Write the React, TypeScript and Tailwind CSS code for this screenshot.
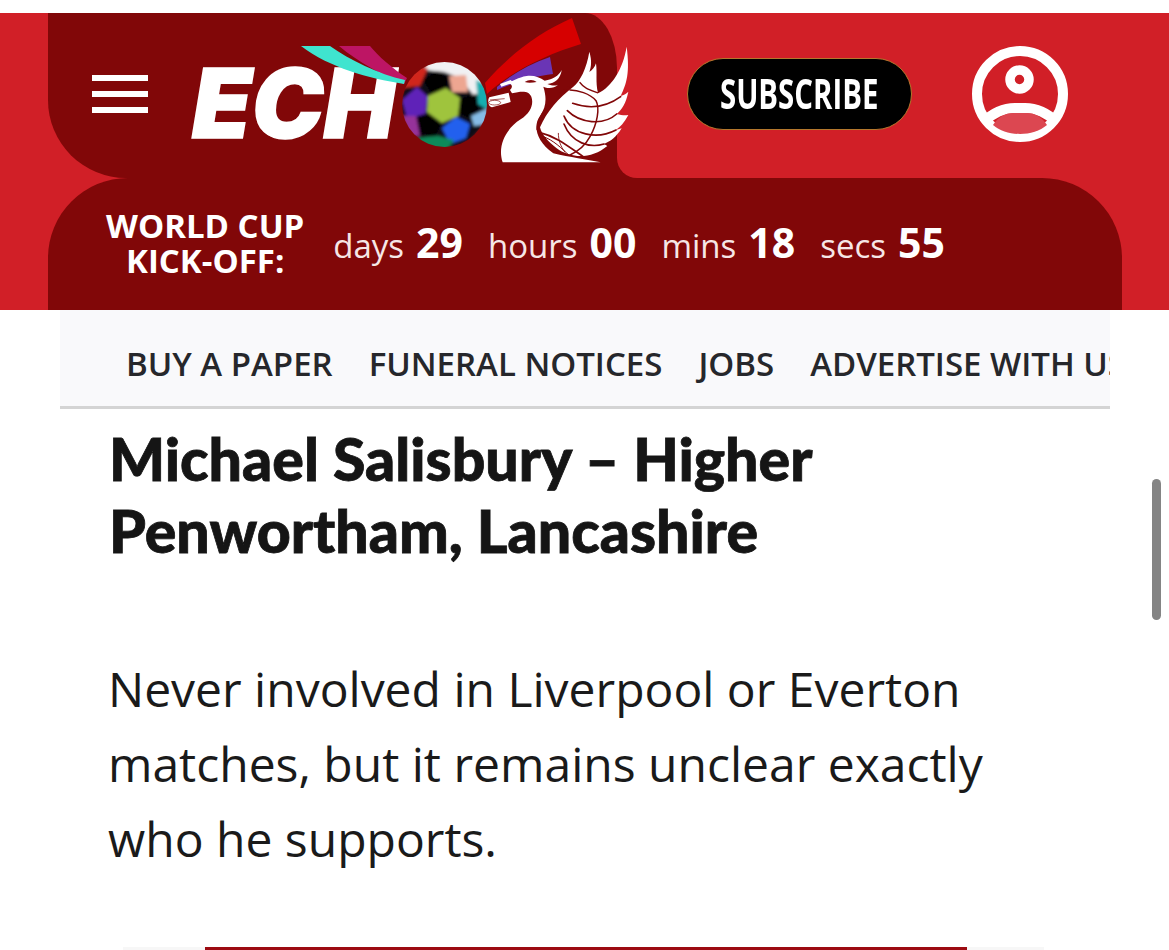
import React from "react";

const DARK = "#810708";

function Bird() {
  return (
    <g transform="translate(490 40) scale(0.33333)">
      {/* body */}
      <path
        fill="#fff"
        d="M38 367 C22 320 45 268 92 238 C122 218 132 192 124 170 C116 152 96 153 66 160 L60 150 C70 140 66 132 54 128 C70 124 84 112 110 108 C130 105 150 112 164 122 C190 118 205 108 215 90 C212 115 195 130 172 132 C188 138 196 138 204 134 C192 146 172 146 160 140 C170 172 170 200 150 228 C130 255 135 300 190 340 C240 352 290 358 332 367 Z"
      />
      <path fill={DARK} d="M104 126 C116 118 130 118 140 126 C128 128 116 130 104 126 Z" />
      {/* wing mass */}
      <path
        fill="#fff"
        d="M150 262 C170 215 205 175 250 140 C270 125 290 85 298 35 C306 62 304 80 298 96 C308 90 314 82 318 70 C322 100 316 125 324 160 C365 140 398 90 410 20 C420 100 410 130 392 168 C402 166 410 160 415 155 C408 190 396 208 380 222 C394 226 406 226 415 225 C402 250 392 258 378 270 L395 265 C378 292 362 304 342 312 L352 318 C325 340 295 350 262 348 C240 345 220 340 200 325 C175 305 155 285 150 262 Z"
      />
      {/* feather and grid lines */}
      <g fill="none" stroke={DARK} strokeWidth="4.5" strokeLinecap="round">
        <path d="M142 268 C142 225 190 170 252 132" strokeWidth="5.5" />
        <path d="M240 150 C262 150 300 160 318 182 C330 205 322 250 300 290 C285 318 262 335 240 345" />
        <path d="M270 128 C282 145 300 150 322 158" />
        <path d="M248 190 C290 205 340 208 392 170" strokeWidth="5" />
        <path d="M232 212 C270 250 340 258 380 222" strokeWidth="5" />
        <path d="M222 228 C245 285 320 300 378 270" strokeWidth="5" />
        <path d="M222 252 C245 310 300 325 342 312" strokeWidth="5" />
        <path d="M150 278 C200 290 235 320 280 350" strokeWidth="5" />
        <path d="M160 290 C190 300 215 325 236 345" strokeWidth="3" />
        <path d="M205 280 C205 300 212 320 224 335" strokeWidth="2.5" />
      </g>
      {/* scroll held in the beak */}
      <path fill="#fff" d="M-2 172 L56 158 L62 186 L6 202 C-6 200 -8 180 -2 172 Z" />
      <g fill="none" stroke={DARK} strokeWidth="2">
        <ellipse cx="14" cy="188" rx="18" ry="7" />
        <path d="M0 180 L44 176" />
      </g>
      <path fill="#fff" d="M30 132 L62 120 L70 128 L34 140 Z" />
    </g>
  );
}

function Ball() {
  return (
    <g clipPath="url(#ballClip)">
      <g filter="url(#ballBlur)">
        <circle cx="444.5" cy="104.5" r="43" fill="#101012" />
        <polygon points="428,56 480,60 492,84 474,96 460,78 444,72 424,70" fill="#f1f1f3" />
        <polygon points="402,88 414,66 428,68 420,86" fill="#d0261c" />
        <polygon points="449,76 466,75 468,92 452,92" fill="#eda691" />
        <polygon points="423,80 436,71 448,78 447,92 430,92" fill="#040404" />
        <polygon points="402,100 417,87 428,97 425,116 407,118" fill="#5e22b8" />
        <polygon points="428,96 446,88 460,98 458,116 442,123 427,112" fill="#9fc43e" />
        <polygon points="461,98 476,94 479,112 468,118 459,113" fill="#040404" />
        <polygon points="476,80 490,86 488,110 478,104" fill="#18aeb0" />
        <polygon points="471,116 488,108 487,124 474,126" fill="#86bbe6" />
        <polygon points="417,116 428,113 441,124 436,136 420,134" fill="#040404" />
        <polygon points="442,128 456,117 470,124 466,138 450,144" fill="#2060ee" />
        <polygon points="402,116 416,116 420,136 410,136" fill="#96309a" />
        <polygon points="418,138 438,136 454,140 446,152 426,152" fill="#0d8a5a" />
      </g>
    </g>
  );
}

function LogoArt() {
  return (
    <svg
      className="absolute left-0 top-0 h-[165px] w-[460px]"
      viewBox="192 13 460 165"
      fill="none"
      aria-hidden="true"
    >
      <defs>
        <clipPath id="ballClip">
          <ellipse cx="444.5" cy="104.5" rx="42.5" ry="42.5" />
        </clipPath>
        <filter id="ballBlur" x="-10%" y="-10%" width="120%" height="120%">
          <feGaussianBlur stdDeviation="1.5" />
        </filter>
      </defs>
      <path d="M339 46 L370 46 C378 56 392 68 407 78 L404 84 C384 76 358 62 339 46 Z" fill="#bd1564" />
      <path d="M301 46 L330 46 C350 60 378 74 405 80 L404 84 C368 78 330 68 301 46 Z" fill="#3fe4cf" />
      <path d="M485 83 C510 54 540 32 572 18 L581 44 C545 55 510 72 487 94 Z" fill="#d60000" />
      <path d="M497 87 C512 74 530 64 550 57 L553 74 C535 76 515 82 497 90 Z" fill="#6a35b5" />
      <Ball />
      <Bird />
    </svg>
  );
}

function ProfileIcon() {
  return (
    <svg viewBox="0 0 96 96" className="h-24 w-24" fill="none" aria-hidden="true">
      <defs>
        <clipPath id="ringClip">
          <circle cx="48" cy="48" r="44" />
        </clipPath>
      </defs>
      <circle cx="48" cy="48" r="43" stroke="#fff" strokeWidth="10" />
      <circle cx="47.5" cy="33.5" r="9.5" stroke="#fff" strokeWidth="9.5" />
      <g clipPath="url(#ringClip)">
        <path
          d="M12 76 C20 67 32 62 43 62 L53 62 C64 62 76 67 84 76"
          stroke="#fff"
          strokeWidth="10"
        />
        <path
          d="M21 79 C26 71 33 67 42 67 L55 67 C63 67 70 71 75 79 C68 85 58 88 48 88 C38 88 28 85 21 79 Z"
          fill="#dc4751"
        />
      </g>
    </svg>
  );
}

function Unit({ label, value }: { label: string; value: string }) {
  return (
    <div className="flex items-baseline gap-3">
      <span className="text-[33px] font-normal text-[#f6e6e6]">{label}</span>
      <span className="text-[41px] font-bold text-white">{value}</span>
    </div>
  );
}

export default function App() {
  return (
    <div className="relative h-[950px] w-[1169px] overflow-hidden bg-white pt-[13px] font-['Open_Sans',sans-serif]">
      <header className="bg-[#d11f27] pr-[47px] pl-12">
        <div className="flex h-[165px]">
          <div className="flex w-[569px] shrink-0 items-center rounded-bl-[78px] rounded-tr-[32px_55px] bg-[#810708] pl-11">
            <div className="mb-[3px] flex w-14 shrink-0 flex-col gap-[10px]">
              <span className="h-1.5 bg-white" />
              <span className="h-1.5 bg-white" />
              <span className="h-1.5 bg-white" />
            </div>
            <div className="relative z-10 ml-11 h-[165px] w-[460px] shrink-0">
              <span className="block pt-[32px] font-['Inter',sans-serif] text-[96px] leading-[116px] font-black text-white italic [-webkit-text-stroke:1.5px_#fff]">
                ECH
              </span>
              <LogoArt />
            </div>
          </div>
          <div className="-mr-[47px] flex-1 bg-[#810708]">
            <div className="flex h-full items-center rounded-bl-[20px] bg-[#d11f27] pr-[101px] pb-1 pl-[70px]">
              <div className="flex h-[72px] w-[225px] items-center justify-center rounded-full border border-[#b3772c] bg-black">
                <span className="shrink-0 scale-x-[0.7] pb-0.5 text-[42px] leading-none font-bold text-white">
                  SUBSCRIBE
                </span>
              </div>
              <div className="ml-auto">
                <ProfileIcon />
              </div>
            </div>
          </div>
        </div>
        <div className="flex h-[132px] items-center rounded-t-[80px] bg-[#810708] pl-[58px] text-white">
          <div className="mb-0.5 text-center text-[33px] leading-[35px] font-bold">
            <div>WORLD CUP</div>
            <div>KICK-OFF:</div>
          </div>
          <div className="mb-[3px] ml-[29px] flex items-baseline gap-[25px]">
            <Unit label="days" value="29" />
            <Unit label="hours" value="00" />
            <Unit label="mins" value="18" />
            <Unit label="secs" value="55" />
          </div>
        </div>
      </header>

      <nav className="mx-[60px] flex h-[99px] w-[1050px] items-center gap-9 overflow-hidden border-b-[3px] border-[#d4d4d4] bg-[#f9f9fb] pt-3 pl-[66px] text-[33px] font-semibold whitespace-nowrap text-[#26272b]">
        <span className="shrink-0">BUY A PAPER</span>
        <span className="shrink-0">FUNERAL NOTICES</span>
        <span className="shrink-0">JOBS</span>
        <span className="shrink-0">ADVERTISE WITH US</span>
      </nav>

      <main className="px-[108px]">
        <h1 className="mt-3.5 ml-px font-['Lato',sans-serif] text-[59px] leading-[72px] font-black text-[#151515] [-webkit-text-stroke:0.8px_#151515]">
          Michael Salisbury – Higher
          <br />
          Penwortham, Lancashire
        </h1>
        <p className="mt-[84px] text-[48px] leading-[75px] text-[#1a1a1a]">
          Never involved in Liverpool or Everton
          <br />
          matches, but it remains unclear exactly
          <br />
          who he supports.
        </p>
      </main>

      <div className="absolute top-[479px] left-[1152px] h-[141px] w-[9px] rounded-full bg-[#848484]" />
      <div className="absolute top-[947px] left-[123px] h-1 w-[921px] bg-[#f7f7f7]">
        <div className="ml-[82px] h-1 w-[762px] bg-[#9c0b12]" />
      </div>
    </div>
  );
}
